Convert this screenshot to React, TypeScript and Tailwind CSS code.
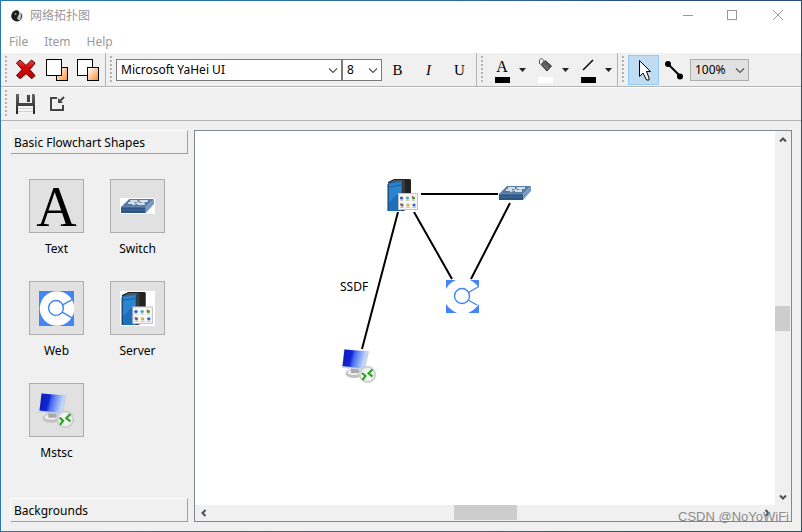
import React from "react";

const uiFont = "font-['Noto_Sans','Noto_Sans_CJK_SC',sans-serif]";

type IconProps = { className?: string };

function YinYang() {
  return (
    <svg className="h-4 w-4" viewBox="0 0 16 16" aria-hidden="true">
      <circle cx="9" cy="8" r="5" fill="#c4c4c4" />
      <path d="M10 2.500A5.500 5.500 0 1 0 13 11.500C10 13 8.500 11 9.500 9C10.500 7 12.500 5 10 2.500Z" fill="#1c1c1c" />
      <path d="M13 4.500A5.500 5.500 0 0 1 13 11.500L12 12C13 9 13.500 7 13 4.500Z" fill="#555" />
      <circle cx="7.500" cy="6" r="1" fill="#999" />
    </svg>
  );
}

function DeleteIcon() {
  return (
    <svg className="h-6 w-6" viewBox="0 0 24 24" aria-hidden="true">
      <defs>
        <linearGradient id="red" x1="0" y1="0" x2="0" y2="1">
          <stop offset="0" stopColor="#ee4a4a" />
          <stop offset="0.4" stopColor="#d60808" />
          <stop offset="1" stopColor="#c20000" />
        </linearGradient>
      </defs>
      <path d="M2.500 5L6 2L12 7.500L17.500 2L21 5L15.500 11.500L21 17.500L17.500 20.500L12 15.500L6 20.500L2.500 17.500L8 11.500Z" transform="translate(1 1)" fill="#bbb" />
      <path d="M2.500 5L6 2L12 7.500L17.500 2L21 5L15.500 11.500L21 17.500L17.500 20.500L12 15.500L6 20.500L2.500 17.500L8 11.500Z" fill="url(#red)" stroke="#4d0000" strokeLinejoin="round" />
    </svg>
  );
}

function OrangeGradient({ id }: { id: string }) {
  return (
    <linearGradient id={id} x1="0" y1="0" x2="1" y2="1">
      <stop offset="0.15" stopColor="#fff3e8" />
      <stop offset="1" stopColor="#ff8a2c" />
    </linearGradient>
  );
}

function ToFrontIcon() {
  return (
    <svg className="h-6 w-6" viewBox="0 0 24 24" aria-hidden="true">
      <defs><OrangeGradient id="front" /></defs>
      <rect x="11.500" y="9.500" width="11" height="13" fill="url(#front)" stroke="#000" />
      <rect x="1.500" y="1.500" width="15" height="16" fill="#fff" stroke="#000" />
    </svg>
  );
}

function ToBackIcon() {
  return (
    <svg className="h-6 w-6" viewBox="0 0 24 24" aria-hidden="true">
      <defs><OrangeGradient id="back" /></defs>
      <rect x="1.500" y="1.500" width="15" height="16" fill="#fff" stroke="#000" />
      <rect x="11.500" y="9.500" width="11" height="13" fill="url(#back)" stroke="#000" />
    </svg>
  );
}

function SaveIcon() {
  return (
    <svg className="h-6 w-6" viewBox="0 0 24 24" aria-hidden="true">
      <defs>
        <linearGradient id="disk" x1="0" y1="0" x2="0" y2="1">
          <stop offset="0" stopColor="#666" />
          <stop offset="1" stopColor="#222" />
        </linearGradient>
      </defs>
      <path d="M2 2H20L21 3V22H2Z" fill="url(#disk)" />
      <rect x="5" y="2" width="13" height="9" fill="#eee" />
      <rect x="13" y="3" width="3" height="7" fill="#444" />
      <rect x="4" y="14" width="15" height="8" fill="#f4f4f4" />
      <path d="M4 16.500H19M4 19.500H19" stroke="#d0d0d0" />
    </svg>
  );
}

function ImportIcon() {
  return (
    <svg className="h-6 w-6" viewBox="0 0 24 24" aria-hidden="true" fill="none" stroke="#444" strokeWidth="2">
      <path d="M12 6H6V18H18V13" />
      <path d="M19 5L14 10" />
      <path d="M13 6V11H18Z" fill="#444" stroke="none" />
    </svg>
  );
}

function DownTriangle() {
  return (
    <svg className="h-4 w-2" viewBox="0 0 8 16" aria-hidden="true">
      <path d="M1 6H8L4.500 10Z" fill="#222" />
    </svg>
  );
}

function BucketGlyph() {
  return (
    <svg className="h-5 w-5" viewBox="0 0 20 20" aria-hidden="true">
      <path d="M4.500 7V3.500C4.500 1 8 1 8.500 4" fill="none" stroke="#555" />
      <path d="M6 7.500L10 3.500L16.500 9L12 14Z" fill="#5d5d5d" stroke="#333" />
      <path d="M8.500 8L13 12" stroke="#888" />
    </svg>
  );
}

function PenGlyph() {
  return (
    <svg className="h-5 w-5" viewBox="0 0 20 20" aria-hidden="true">
      <path d="M5 13L15 3" stroke="#000" strokeWidth="1.500" />
    </svg>
  );
}

function CursorIcon() {
  return (
    <svg className="h-6 w-6" viewBox="0 0 24 24" aria-hidden="true">
      <path d="M7.500 2.500V18.500L11 15L14.500 22H17V20L14.500 13.500H18.500Z" fill="#fff" stroke="#000" />
    </svg>
  );
}

function LinkIcon() {
  return (
    <svg className="h-6 w-6" viewBox="0 0 24 24" aria-hidden="true">
      <path d="M5 6L17 18" stroke="#000" strokeWidth="2" />
      <circle cx="5" cy="6" r="3" />
      <circle cx="17" cy="18.500" r="3" />
    </svg>
  );
}

function Chevron({ className }: IconProps) {
  return (
    <svg className={className} viewBox="0 0 10 10" aria-hidden="true">
      <path d="M1 3.500L5 7.500L9 3.500" fill="none" stroke="#555" strokeWidth="1.200" />
    </svg>
  );
}

function LetterShape() {
  return (
    <span aria-hidden="true" className="mt-0.5 font-['Liberation_Serif',serif] text-[56px] leading-[56px] text-black">A</span>
  );
}

function SwitchShape({ className }: IconProps) {
  return (
    <svg className={className} viewBox="0 0 34 16" preserveAspectRatio="none" aria-hidden="true">
      <rect width="34" height="16" fill="#fff" />
      <path d="M9 1H33L25 9H1Z" fill="#557aa3" />
      <path d="M1 9H25V15H1Z" fill="#2c5485" />
      <path d="M25 9L33 1V6L25 15Z" fill="#7599c5" />
      <path d="M1 9H25L33 1" fill="none" stroke="#8ba9cb" strokeWidth="0.500" />
      <path d="M10 3H17M8 5H14M17 6H24M19 3H27" stroke="#fff" strokeWidth="1.300" />
      <path d="M12 7L19 4M21 5L26 3" stroke="#dce7f2" />
      <path d="M2 12H24" stroke="#426b9b" />
    </svg>
  );
}

function WebShape({ className }: IconProps) {
  return (
    <svg className={className} viewBox="0 0 34 34" aria-hidden="true">
      <rect width="34" height="34" fill="#4285f4" />
      <circle cx="17.500" cy="17" r="16.800" fill="#fff" />
      <g fill="none" stroke="#4285f4" strokeWidth="1.400">
        <circle cx="16.500" cy="16.500" r="7.200" />
        <path d="M23 13.500L33 8M22.500 20.500L32 26" />
      </g>
    </svg>
  );
}

function WebNode({ className }: IconProps) {
  return (
    <svg className={className} viewBox="0 0 33 33" aria-hidden="true">
      <rect width="33" height="33" fill="#fff" />
      <path d="M0 0H10Q3 3 0 9ZM33 0H24Q30 3 33 8ZM0 24Q4 30 11 33H0ZM33 24Q29 30 22 33H33Z" fill="#4285f4" />
      <g fill="none" stroke="#4285f4" strokeWidth="1.400">
        <circle cx="16" cy="16" r="7.500" />
        <path d="M22.500 12.500L32 7M22 20L31 25" />
      </g>
    </svg>
  );
}

function ServerShape({ className }: IconProps) {
  return (
    <svg className={className} viewBox="0 0 34 34" aria-hidden="true">
      <rect width="34" height="34" fill="#fff" />
      <path d="M2 4L8 1H24L25 2V30L17 33H2Z" fill="#222" />
      <path d="M3 5L8 2H18L15 5Z" fill="#555" />
      <path d="M2 5L16 3V33H2Z" fill="#1c6fb8" />
      <path d="M3 6L15 4V14Q8 18 3 25Z" fill="#2a84d0" />
      <path d="M3 9L15 7" stroke="#1563a6" />
      <path d="M16 4L19 2V32L16 33Z" fill="#3a3a3a" />
      <path d="M2 6V33" stroke="#183654" />
      <rect x="12.500" y="15.500" width="19" height="16" fill="#f7f7f7" stroke="#c4c4c4" />
      <g>
        <circle cx="15.500" cy="20" r="1.600" fill="#2b56c5" />
        <circle cx="21.500" cy="20" r="1.600" fill="#46a6c8" />
        <circle cx="27.500" cy="20" r="1.600" fill="#459a35" />
        <circle cx="16" cy="27" r="1.600" fill="#686168" />
        <circle cx="22" cy="27" r="1.600" fill="#d5ae39" />
        <circle cx="28" cy="27" r="1.600" fill="#3164c8" />
        <path d="M14 22.500H17M20 22.500H23M26 22.500H29M14 29.500H18M20 29.500H24M26 29.500H30" stroke="#aaa" strokeWidth="0.600" />
        <path d="M26 18L28 20M14 26H16" stroke="#d8424b" />
      </g>
    </svg>
  );
}

function MstscShape({ className }: IconProps) {
  return (
    <svg className={className} viewBox="0 0 34 34" aria-hidden="true">
      <defs>
        <linearGradient id="screen" x1="0" y1="0" x2="1" y2="0.200">
          <stop offset="0" stopColor="#0c18b4" />
          <stop offset="0.420" stopColor="#1226d6" />
          <stop offset="0.550" stopColor="#4a6cec" />
          <stop offset="1" stopColor="#c4dcff" />
        </linearGradient>
        <radialGradient id="ball">
          <stop offset="0" stopColor="#fff" />
          <stop offset="0.700" stopColor="#f0f0f0" />
          <stop offset="1" stopColor="#c4c4c4" />
        </radialGradient>
      </defs>
      <ellipse cx="12" cy="24.500" rx="8.500" ry="4.500" fill="#c2c2c2" />
      <ellipse cx="12" cy="23.500" rx="6.500" ry="2.500" fill="#eee" />
      <path d="M9 18H17V24H9Z" fill="#aaa" />
      <path d="M2 0L27 2L23 21L0 19Z" fill="#c8d3e4" />
      <path d="M2.500 0.500L24.500 2.500L21 19.500L0.500 17Z" fill="url(#screen)" />
      <circle cx="25.500" cy="25.500" r="8.200" fill="url(#ball)" stroke="#c8c8c8" strokeWidth="0.600" />
      <path d="M20 24L23.500 27L20.500 31M30.500 20.500L26.500 24.500L30.500 27.500" fill="none" stroke="#30a52a" strokeWidth="2.200" />
    </svg>
  );
}

function Grip() {
  return (
    <span
      aria-hidden="true"
      className="h-7 w-0.5 shrink-0 bg-[repeating-linear-gradient(to_bottom,#b4b4b4_0px,#b4b4b4_2px,transparent_2px,transparent_4px)]"
    />
  );
}

function ToolButton({ label, className, children }: { label: string; className?: string; children: React.ReactNode }) {
  return (
    <button type="button" aria-label={label} className={`flex h-[30px] w-[31px] shrink-0 items-center justify-center ${className ?? ""}`}>
      {children}
    </button>
  );
}

function ColorButton({ label, swatch, children }: { label: string; swatch: string; children: React.ReactNode }) {
  return (
    <button type="button" aria-label={label} className="flex h-[30px] w-[43px] shrink-0 items-center gap-1">
      <span className="flex w-6 flex-col items-center">
        <span className="flex h-5 items-center">{children}</span>
        <span className={`h-1.5 w-[15px] ${swatch}`} />
      </span>
      <DownTriangle />
    </button>
  );
}

function Combo({ label, value, options, className, width }: { label: string; value: string; options: string[]; className: string; width: string }) {
  return (
    <label className={`relative block h-[22px] shrink-0 ${width}`}>
      <select aria-label={label} defaultValue={value} className={`h-full w-full appearance-none border pl-1 pr-4 text-xs text-black outline-none ${className}`}>
        {options.map((o) => <option key={o}>{o}</option>)}
      </select>
      <Chevron className="pointer-events-none absolute top-1.5 right-1 h-2.5 w-2.5" />
    </label>
  );
}

const menus = ["File", "Item", "Help"];
const bar = "flex shrink-0 items-center border-t border-b border-t-white border-b-[#b4b4b4]";
const group = "flex h-full shrink-0 items-center border-r border-r-[#b4b4b4] pl-1";

const shapes = [
  { name: "Text", art: <LetterShape /> },
  { name: "Switch", art: <SwitchShape className="h-4 w-[35px]" /> },
  { name: "Web", art: <WebShape className="h-[35px] w-[35px]" /> },
  { name: "Server", art: <ServerShape className="h-[35px] w-[35px]" /> },
  { name: "Mstsc", art: <MstscShape className="h-[35px] w-[35px]" /> },
];

const sectionHeader =
  "h-6 w-full shrink-0 border border-t-white border-l-white border-r-[#a0a0a0] border-b-[#a0a0a0] pt-0.5 pl-[3px] text-left text-xs leading-5";

const arrow = "flex shrink-0 items-center justify-center";

function ArrowGlyph({ className }: IconProps) {
  return (
    <svg className={`h-2 w-2 ${className ?? ""}`} viewBox="0 0 8 8" aria-hidden="true">
      <path d="M1 5.500L4 2.500L7 5.500" fill="none" stroke="#505050" strokeWidth="2" />
    </svg>
  );
}

export default function App() {
  return (
    <div className={`h-screen bg-[linear-gradient(90deg,#2878ac,#30699b_60%,#2c4c86_80%)] p-px text-xs text-black ${uiFont}`}>
      <div className="relative flex h-full flex-col overflow-hidden bg-[#f0f0f0]">
        <header className="flex h-[30px] shrink-0 items-center bg-white pr-px pl-[7px] text-[#999]">
          <YinYang />
          <h1 className="ml-1.5 grow">网络拓扑图</h1>
          <button type="button" aria-label="Minimize" className="flex h-full w-[45px] items-center justify-center">
            <svg className="h-3 w-3" viewBox="0 0 12 12"><path d="M1 5.500H11" stroke="#999" /></svg>
          </button>
          <button type="button" aria-label="Maximize" className="flex h-full w-[45px] items-center justify-center">
            <svg className="h-3 w-3" viewBox="0 0 12 12"><rect x="0.500" y="0.500" width="9" height="9" fill="none" stroke="#999" /></svg>
          </button>
          <button type="button" aria-label="Close" className="flex h-full w-[45px] items-center justify-center">
            <svg className="h-3 w-3" viewBox="0 0 12 12"><path d="M1 0L11 10M11 0L1 10" stroke="#999" /></svg>
          </button>
        </header>

        <nav className="flex h-[21px] shrink-0 items-center gap-4 bg-white pl-2 text-[#999]">
          {menus.map((m) => <button type="button" key={m}>{m}</button>)}
        </nav>

        <div className={`${bar} h-[35px]`}>
          <div className={`${group} w-[105px]`}>
            <Grip />
            <div className="ml-[3px] flex">
              <ToolButton label="Delete"><DeleteIcon /></ToolButton>
              <ToolButton label="Bring to front"><ToFrontIcon /></ToolButton>
              <ToolButton label="Send to back"><ToBackIcon /></ToolButton>
            </div>
          </div>
          <div className={`${group} w-[371px]`}>
            <Grip />
            <div className="ml-1 flex">
              <Combo label="Font" value="Microsoft YaHei UI" options={["Microsoft YaHei UI"]} width="w-[226px]" className="border-[#7a7a7a] bg-white" />
              <Combo label="Font size" value="8" options={["8", "10", "12", "14"]} width="w-10" className="border-[#7a7a7a] bg-white" />
            </div>
            <div className="flex pt-0.5 font-['Liberation_Serif',serif] text-[15px]">
              <ToolButton label="Bold">B</ToolButton>
              <ToolButton label="Italic"><i>I</i></ToolButton>
              <ToolButton label="Underline">U</ToolButton>
            </div>
          </div>
          <div className={`${group} w-[141px]`}>
            <Grip />
            <div className="ml-[7px] flex">
              <ColorButton label="Text color" swatch="bg-black">
                <span className="font-['Liberation_Serif',serif] text-base leading-5">A</span>
              </ColorButton>
              <ColorButton label="Fill color" swatch="bg-white"><BucketGlyph /></ColorButton>
              <ColorButton label="Line color" swatch="bg-black"><PenGlyph /></ColorButton>
            </div>
          </div>
          <div className="flex items-center pl-1">
            <Grip />
            <div className="ml-1 flex items-center">
              <ToolButton label="Pointer" className="border border-[#91c9f7] bg-[#c0dcf3]"><CursorIcon /></ToolButton>
              <ToolButton label="Connector"><LinkIcon /></ToolButton>
              <Combo label="Zoom" value="100%" options={["50%", "75%", "100%", "125%", "150%"]} width="w-[59px]" className="border-[#adadad] bg-[#e1e1e1]" />
            </div>
          </div>
        </div>

        <div className={`${bar} h-[34px] pl-1`}>
          <Grip />
          <div className="ml-[3px] flex">
            <ToolButton label="Save"><SaveIcon /></ToolButton>
            <ToolButton label="Import"><ImportIcon /></ToolButton>
          </div>
        </div>

        <main className="flex min-h-0 grow gap-1.5 p-[9px]">
          <aside className="flex w-[178px] shrink-0 flex-col">
            <button type="button" aria-expanded="true" className={sectionHeader}>Basic Flowchart Shapes</button>
            <div className="grid grow grid-cols-[55px_55px] content-start gap-x-[26px] gap-y-6 pt-[25px] pl-[19px]">
              {shapes.map((s) => (
                <div key={s.name} className="flex h-[78px] flex-col items-center">
                  <button type="button" aria-label={s.name} className="flex h-[54px] w-full shrink-0 items-center justify-center border border-[#adadad] bg-[#e1e1e1]">
                    {s.art}
                  </button>
                  <span className="mt-2">{s.name}</span>
                </div>
              ))}
            </div>
            <button type="button" aria-expanded="false" className={sectionHeader}>Backgrounds</button>
          </aside>

          <section aria-label="Diagram" className="grid min-w-0 grow grid-cols-[1fr_16px] grid-rows-[1fr_16px] border border-[#828790]">
            <div className="relative overflow-hidden bg-white">
              <svg className="absolute top-0 left-0 h-[374px] w-[580px]" viewBox="0 0 580 374" stroke="#000" strokeWidth="2" aria-hidden="true">
                <path d="M226 63H303M219 81L257 148M315 72L276 148M203 81L167 218" fill="none" />
              </svg>
              <ServerShape className="absolute top-[47px] left-[191px] h-[34px] w-[34px]" />
              <SwitchShape className="absolute top-[54px] left-[303px] h-4 w-[34px]" />
              <WebNode className="absolute top-[149px] left-[251px] h-[33px] w-[33px]" />
              <MstscShape className="absolute top-[218px] left-[147px] h-[34px] w-[34px]" />
              <span className="absolute top-[148px] left-[145px]">SSDF</span>
            </div>
            <div className="flex flex-col pr-px">
              <button type="button" aria-label="Scroll up" className={`${arrow} h-[17px]`}><ArrowGlyph /></button>
              <div className="flex grow flex-col justify-center"><div className="h-[25px] bg-[#cdcdcd]" /></div>
              <button type="button" aria-label="Scroll down" className={`${arrow} h-[17px]`}><ArrowGlyph className="rotate-180" /></button>
            </div>
            <div className="flex pb-px">
              <button type="button" aria-label="Scroll left" className={`${arrow} w-[17px]`}><ArrowGlyph className="-rotate-90" /></button>
              <div className="flex grow justify-center"><div className="w-[63px] bg-[#cdcdcd]" /></div>
              <button type="button" aria-label="Scroll right" className={`${arrow} w-[17px]`}><ArrowGlyph className="rotate-90" /></button>
            </div>
          </section>
        </main>

        <span className="pointer-events-none absolute right-3 bottom-1 font-['Liberation_Sans',sans-serif] text-[13px] leading-5 text-[#8c8c8c]">
          CSDN @NoYoWiFi
        </span>
      </div>
    </div>
  );
}
